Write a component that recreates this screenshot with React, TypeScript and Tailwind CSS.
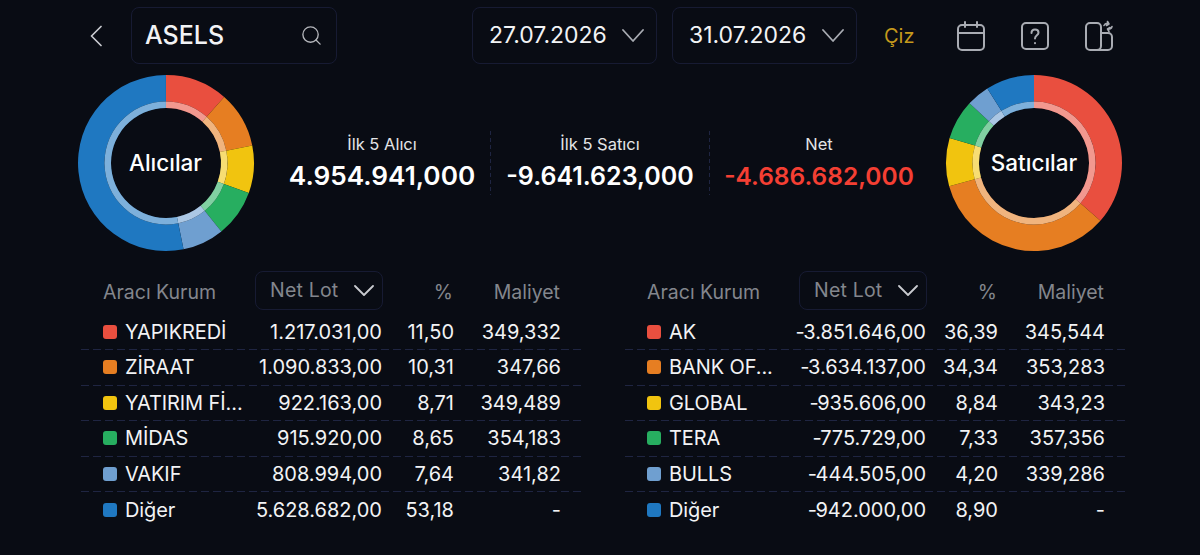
import React from 'react';
import { Search } from 'lucide-react';

const COLORS = ['#e94f3f', '#e67e22', '#f1c40f', '#27ae60', '#6f9fd0', '#1f78c1'];

type Row = { name: string; lot: string; pct: string; cost: string };

const buyers: Row[] = [
  { name: 'YAPIKREDİ', lot: '1.217.031,00', pct: '11,50', cost: '349,332' },
  { name: 'ZİRAAT', lot: '1.090.833,00', pct: '10,31', cost: '347,66' },
  { name: 'YATIRIM Fİ...', lot: '922.163,00', pct: '8,71', cost: '349,489' },
  { name: 'MİDAS', lot: '915.920,00', pct: '8,65', cost: '354,183' },
  { name: 'VAKIF', lot: '808.994,00', pct: '7,64', cost: '341,82' },
  { name: 'Diğer', lot: '5.628.682,00', pct: '53,18', cost: '-' },
];

const sellers: Row[] = [
  { name: 'AK', lot: '-3.851.646,00', pct: '36,39', cost: '345,544' },
  { name: 'BANK OF...', lot: '-3.634.137,00', pct: '34,34', cost: '353,283' },
  { name: 'GLOBAL', lot: '-935.606,00', pct: '8,84', cost: '343,23' },
  { name: 'TERA', lot: '-775.729,00', pct: '7,33', cost: '357,356' },
  { name: 'BULLS', lot: '-444.505,00', pct: '4,20', cost: '339,286' },
  { name: 'Diğer', lot: '-942.000,00', pct: '8,90', cost: '-' },
];

const arc = (r1: number, r2: number, from: number, to: number) => {
  const pt = (r: number, p: number) => {
    const a = (p / 100) * Math.PI * 2;
    return `${(90 + r * Math.sin(a)).toFixed(2)} ${(90 - r * Math.cos(a)).toFixed(2)}`;
  };
  const large = to - from > 50 ? 1 : 0;
  return `M${pt(r1, from)} A${r1} ${r1} 0 ${large} 1 ${pt(r1, to)} L${pt(r2, to)} A${r2} ${r2} 0 ${large} 0 ${pt(r2, from)} Z`;
};

const Donut = ({ values, label }: { values: number[]; label: string }) => {
  let sum = 0;
  const segments = values.map((v) => {
    const from = sum;
    sum += v;
    return { from, to: sum };
  });
  return (
    <div className="relative w-[180px] h-[180px] shrink-0">
      <svg width="180" height="180" viewBox="0 0 180 180">
        {segments.map((s, i) => (
          <g key={i}>
            <path d={arc(88, 61.5, s.from, s.to)} fill={COLORS[i]} />
            <path d={arc(61.5, 55, s.from, s.to)} fill={COLORS[i]} />
            <path d={arc(61.5, 55, s.from, s.to)} fill="#ffffff" fillOpacity={0.42} />
          </g>
        ))}
      </svg>
      <div className="absolute inset-0 flex items-center justify-center text-[22.5px] font-medium text-white">
        {label}
      </div>
    </div>
  );
};

const Chevron = ({ className, width, height }: { className: string; width: number; height: number }) => (
  <svg className={className} width={width} height={height} viewBox={`0 0 ${width} ${height}`} fill="none" stroke="currentColor" strokeWidth="1.8" strokeLinecap="round" strokeLinejoin="round">
    <path d={`M1 1L${width / 2} ${height - 1}L${width - 1} 1`} />
  </svg>
);

const DateBox = ({ value }: { value: string }) => (
  <div className="w-[185px] h-[57px] flex items-center justify-between pl-[16px] pr-[12px] rounded-lg border border-[#171b33] text-[23px] text-[#f2f3f5]">
    <span>{value}</span>
    <Chevron className="text-[#a8abb2]" width={22} height={13} />
  </div>
);

const Stat = ({ title, value, size, red }: { title: string; value: string; size: string; red?: boolean }) => (
  <div className="flex flex-col items-center">
    <div className="text-[16.5px] leading-[20px] text-[#e3e4e7]">{title}</div>
    <div className={`mt-[6px] ${size} leading-[32px] font-semibold whitespace-nowrap ${red ? 'text-[#f43f33]' : 'text-white'}`}>{value}</div>
  </div>
);

const signed = (s: string) =>
  s.startsWith('-') ? (
    <>
      <span className="tracking-[-1.5px]">-</span>
      {s.slice(1)}
    </>
  ) : (
    s
  );

const BrokerTable = ({ rows }: { rows: Row[] }) => (
  <div className="w-[502px] shrink-0">
    <div className="h-[39px] flex items-center text-[19.5px] text-[#83868d]">
      <div className="w-[174px] pl-[22px] pt-[4px]">Aracı Kurum</div>
      <div className="w-[128px] h-[39px] flex items-center justify-between pl-[14px] pr-[8px] rounded-lg border border-[#171b33]">
        <span className="tracking-[0.2px]">Net Lot</span>
        <Chevron className="text-[#c9cbd0]" width={20} height={11} />
      </div>
      <div className="w-[70px] text-right pt-[4px]">%</div>
      <div className="w-[107px] text-right pt-[4px]">Maliyet</div>
    </div>
    <div className="mt-[4px]">
      {rows.map((r, i) => (
        <div key={r.name}>
          <div className="h-[35px] flex items-center text-[20px] text-[#f2f3f5]">
            <span className="ml-[22px] w-[14px] h-[14px] rounded-[3px] shrink-0" style={{ backgroundColor: COLORS[i] }} />
            <span className="ml-[8px] w-[118px] tracking-[-0.1px] whitespace-nowrap">{r.name}</span>
            <span className="w-[139px] text-right whitespace-nowrap">{signed(r.lot)}</span>
            <span className="w-[72px] text-right">{r.pct}</span>
            <span className="w-[107px] text-right">{r.cost}</span>
          </div>
          {i < rows.length - 1 && (
            <div className="h-[1px] mb-[-0.4px] bg-[repeating-linear-gradient(90deg,#1f2542_0_8px,transparent_8px_12px)]" />
          )}
        </div>
      ))}
    </div>
  </div>
);

const Separator = () => (
  <div className="ml-[15px] w-[1px] h-[64px] bg-[repeating-linear-gradient(180deg,#1f2542_0_4px,transparent_4px_7px)]" />
);

export default function App() {
  return (
    <div className="w-[1200px] h-[555px] overflow-hidden bg-[#090c14] font-['Inter',sans-serif] px-[78px] pt-[7px]">
      {/* ust bar */}
      <div className="flex items-center">
        <svg className="ml-[12px] mr-[12px] text-[#c9cbd0]" width="12" height="22" viewBox="0 0 12 22" fill="none" stroke="currentColor" strokeWidth="1.7" strokeLinecap="round" strokeLinejoin="round">
          <path d="M11 1.5L1.5 11L11 20.5" />
        </svg>
        <div className="ml-[17px] w-[206px] h-[57px] flex items-center justify-between pl-[13px] pr-[13px] rounded-lg border border-[#171b33] text-[25px] font-medium text-[#f2f3f5]">
          <span>ASELS</span>
          <Search className="w-[23px] h-[23px] text-[#b5b7bc]" strokeWidth={1.4} />
        </div>
        <div className="ml-[135px] flex gap-[15px]">
          <DateBox value="27.07.2026" />
          <DateBox value="31.07.2026" />
        </div>
        <div className="ml-[27px] text-[20px] text-[#c59a1c]">Çiz</div>
        <div className="ml-[40px] flex items-center gap-[32px] text-[#a9acb3]">
          <svg width="32" height="32" viewBox="0 0 32 32" fill="none" stroke="currentColor" strokeWidth="2" strokeLinecap="round">
            <rect x="3" y="5" width="26" height="25" rx="4" />
            <path d="M3 13H29M10 2V7M22 2V7" />
          </svg>
          <svg width="32" height="32" viewBox="0 0 32 32" fill="none" stroke="currentColor" strokeWidth="2" strokeLinecap="round">
            <rect x="3" y="3" width="26" height="26" rx="4" />
            <path d="M12.5 13C12.5 10.8 14 9.5 16 9.5C18 9.5 19.5 10.8 19.5 12.7C19.5 15.2 16 15.4 16 18.5" />
            <path d="M16 23V23.2" />
          </svg>
          <svg width="32" height="32" viewBox="0 0 32 32" fill="none" stroke="currentColor" strokeWidth="2" strokeLinecap="round" strokeLinejoin="round">
            <rect x="3" y="3" width="15" height="27" rx="4" />
            <path d="M18 13H25C27.2 13 29 14.8 29 17V26C29 28.2 27.2 30 25 30H14" />
            <path d="M21 5.5C22 3.5 24 3 26 4M26 4L24.5 1.5M26 4L23.5 5.5" strokeWidth="1.6" />
            <path d="M29 6.5C28.5 8.8 26.5 9.8 24.5 9M24.5 9L26 11.5M24.5 9L27 7.5" strokeWidth="1.6" />
          </svg>
        </div>
      </div>

      {/* donut ve ozet */}
      <div className="mt-[9px] flex items-center h-[180px]">
        <div className="ml-[-2.5px]">
          <Donut values={[11.5, 10.31, 8.71, 8.65, 7.64, 53.18]} label="Alıcılar" />
        </div>
        <div className="ml-[33.5px] w-[186px] flex justify-center">
          <Stat title="İlk 5 Alıcı" value="4.954.941,000" size="text-[26.2px]" />
        </div>
        <Separator />
        <div className="ml-[15px] w-[188px] flex justify-center">
          <Stat title="İlk 5 Satıcı" value="-9.641.623,000" size="text-[25px]" />
        </div>
        <Separator />
        <div className="ml-[15px] w-[188px] flex justify-center">
          <Stat title="Net" value="-4.686.682,000" size="text-[24.5px]" red />
        </div>
        <div className="ml-auto mr-[-2px]">
          <Donut values={[36.39, 34.34, 8.84, 7.33, 4.2, 8.9]} label="Satıcılar" />
        </div>
      </div>

      {/* tablolar */}
      <div className="mt-[18px] ml-[3px] flex gap-[42px]">
        <BrokerTable rows={buyers} />
        <BrokerTable rows={sellers} />
      </div>
    </div>
  );
}
